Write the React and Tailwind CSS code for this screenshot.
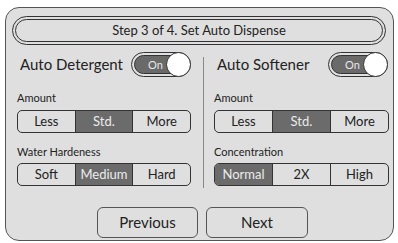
import React, { useState } from 'react';

const Toggle = ({ on }) => (
  <div className="relative w-[60px] h-[25px] rounded-full border border-[#333] p-[2px] bg-[#e0e0e0] shrink-0">
    <div className="h-full w-full rounded-full border border-[#333] bg-[#6a6a6a] flex items-center pl-[13px]">
      <span className="text-[11px] leading-none text-[#e6e6e6]">{on ? 'On' : 'Off'}</span>
    </div>
    <div className="absolute right-[-1px] top-[-1px] w-[25px] h-[25px] rounded-full bg-white border border-[#333]" />
  </div>
);

const Segmented = ({ options, value, onChange }) => (
  <div className="flex h-[23px] rounded-[5px] border border-[#333] overflow-hidden">
    {options.map((opt, i) => (
      <button
        key={opt}
        onClick={() => onChange(opt)}
        className={
          'flex-1 flex items-center justify-center text-[13px] leading-none ' +
          (i > 0 ? 'border-l border-[#333] ' : '') +
          (opt === value ? 'bg-[#6b6b6b] text-[#ececec]' : 'text-[#222]')
        }
      >
        {opt}
      </button>
    ))}
  </div>
);

export default function App() {
  const [amountL, setAmountL] = useState('Std.');
  const [hardness, setHardness] = useState('Medium');
  const [amountR, setAmountR] = useState('Std.');
  const [conc, setConc] = useState('Normal');

  return (
    <div className="w-[398px] h-[243px] bg-white pt-[7px] pl-[5px]" style={{ fontFamily: 'Lato, "Open Sans", sans-serif' }}>
      <div className="w-[389px] h-[234px] rounded-[14px] border border-[#555] bg-[#dfdfdf] flex flex-col text-[#222]">
        {/* barra de titulo */}
        <div className="mt-[8px] ml-[6px] mr-[7px] h-[29px] rounded-full border border-[#333] p-[2px]">
          <div className="h-full rounded-full border border-[#333] flex items-center justify-center text-[13px]">
            Step 3 of 4. Set Auto Dispense
          </div>
        </div>

        <div className="flex mt-[7px]">
          {/* columna izquierda */}
          <div className="w-[185px] pl-[11px]">
            <div className="flex items-center justify-between h-[25px]">
              <span className="pl-[3px] text-[15px]">Auto Detergent</span>
              <Toggle on />
            </div>
            <div className="mt-[14px] h-[14px] leading-[14px] text-[11px]">Amount</div>
            <div className="mt-[5px]">
              <Segmented options={['Less', 'Std.', 'More']} value={amountL} onChange={setAmountL} />
            </div>
            <div className="mt-[12px] h-[14px] leading-[14px] text-[11px]">Water Hardeness</div>
            <div className="mt-[4px]">
              <Segmented options={['Soft', 'Medium', 'Hard']} value={hardness} onChange={setHardness} />
            </div>
          </div>

          {/* divisor */}
          <div className="ml-[12px] mt-[5px] w-px h-[131px] bg-[#888]" />

          {/* columna derecha */}
          <div className="w-[185px] pl-[10px]">
            <div className="flex items-center justify-between h-[25px] pr-[1px]">
              <span className="pl-[3px] text-[15px]">Auto Softener</span>
              <Toggle on />
            </div>
            <div className="mt-[14px] h-[14px] leading-[14px] text-[11px]">Amount</div>
            <div className="mt-[5px]">
              <Segmented options={['Less', 'Std.', 'More']} value={amountR} onChange={setAmountR} />
            </div>
            <div className="mt-[12px] h-[14px] leading-[14px] text-[11px]">Concentration</div>
            <div className="mt-[4px]">
              <Segmented options={['Normal', '2X', 'High']} value={conc} onChange={setConc} />
            </div>
          </div>
        </div>

        {/* botones */}
        <div className="flex justify-center gap-[8px] mt-[19px] pl-[6px]">
          <button className="w-[101px] h-[31px] rounded-[6px] border border-[#555] text-[15px]">Previous</button>
          <button className="w-[102px] h-[31px] rounded-[6px] border border-[#555] text-[15px]">Next</button>
        </div>
      </div>
    </div>
  );
}
